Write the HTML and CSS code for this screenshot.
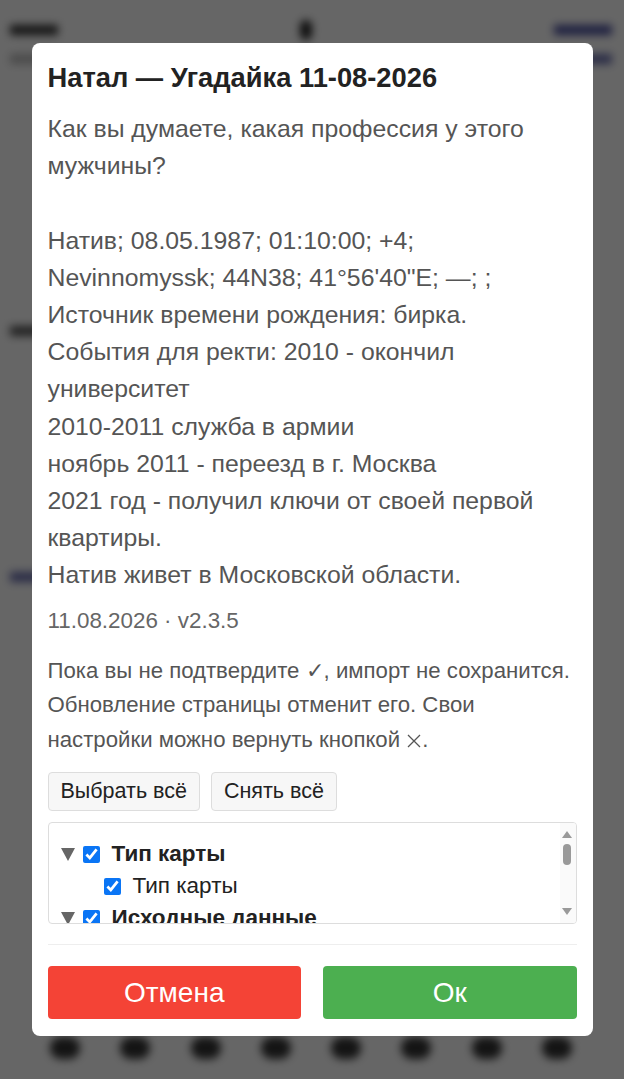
FILE: index.html
```html
<!DOCTYPE html>
<html lang="ru">
	<head>
		<meta charset="utf-8">
		<title>Натал — Угадайка</title>
		<link rel="stylesheet" href="styles.css">
	</head>
	<body>
		<!-- page under the dialog -->
		<div class="page">
			<div class="page-top">
				<span class="page-brand"></span>
				<span class="page-avatar"></span>
				<span class="page-link"></span>
			</div>
			<div class="page-sub">
				<span class="page-line short"></span>
				<span class="page-line link"></span>
			</div>
			<div class="page-body">
				<span class="page-line dark"></span>
				<span class="page-line link"></span>
			</div>
			<div class="page-dock">
				<span></span><span></span><span></span><span></span>
				<span></span><span></span><span></span><span></span>
			</div>
		</div>

		<div class="overlay">
			<div class="dialog">
				<h3 class="dialog-title">Натал — Угадайка 11-08-2026</h3>
				<div class="dialog-text">Как вы думаете, какая профессия у этого мужчины?

Натив; 08.05.1987; 01:10:00; +4; Nevinnomyssk; 44N38; 41°56'40"E; —; ;
Источник времени рождения: бирка.
События для ректи: 2010 - окончил университет
2010-2011 служба в армии
ноябрь 2011 - переезд в г. Москва
2021 год - получил ключи от своей первой квартиры.
Натив живет в Московской области.</div>
				<div class="dialog-meta">11.08.2026 · v2.3.5</div>
				<p class="dialog-note">Пока вы не подтвердите ✓, импорт не сохранится. Обновление страницы отменит его. Свои настройки можно вернуть кнопкой <svg class="icon-x" viewBox="0 0 14 14"><path d="M1 1L13 13M13 1L1 13" /></svg>.</p>

				<div class="select-row">
					<button class="btn-light">Выбрать всё</button>
					<button class="btn-light">Снять всё</button>
				</div>

				<div class="tree-box">
					<ul class="tree">
						<li>
							<label class="tree-row">
								<svg class="caret" viewBox="0 0 14 13"><polygon points="0,0 14,0 7,13" /></svg>
								<input type="checkbox" checked>
								<b>Тип карты</b>
							</label>
							<ul>
								<li><label class="tree-row"><input type="checkbox" checked> Тип карты</label></li>
							</ul>
						</li>
						<li>
							<label class="tree-row">
								<svg class="caret" viewBox="0 0 14 13"><polygon points="0,0 14,0 7,13" /></svg>
								<input type="checkbox" checked>
								<b>Исходные данные</b>
							</label>
							<ul>
								<li><label class="tree-row"><input type="checkbox" checked> Дата и время</label></li>
								<li><label class="tree-row"><input type="checkbox" checked> Место рождения</label></li>
								<li><label class="tree-row"><input type="checkbox" checked> Часовой пояс</label></li>
							</ul>
						</li>
						<li>
							<label class="tree-row">
								<svg class="caret" viewBox="0 0 14 13"><polygon points="0,0 14,0 7,13" /></svg>
								<input type="checkbox" checked>
								<b>Настройки</b>
							</label>
						</li>
					</ul>
					<div class="scrollbar">
						<svg class="scroll-arrow" viewBox="0 0 10 7"><polygon points="0,7 10,7 5,0" /></svg>
						<div class="scroll-track"><div class="scroll-thumb"></div></div>
						<svg class="scroll-arrow" viewBox="0 0 10 7"><polygon points="0,0 10,0 5,7" /></svg>
					</div>
				</div>

				<div class="dialog-foot">
					<button class="btn btn-cancel">Отмена</button>
					<button class="btn btn-ok">Ок</button>
				</div>
			</div>
		</div>
	</body>
</html>
```

FILE: styles.css
```css
html, body {
	margin: 0;
	height: 100%;
}

body {
	font-family: "Liberation Sans", Arial, Helvetica, sans-serif;
	background-color: #fff;
	overflow: hidden;
}

/* page behind the modal */
.page {
	height: 100%;
	display: flex;
	flex-direction: column;
	padding: 20px 12px 0 10px;
	box-sizing: border-box;
	filter: blur(4px);
}

.page-top {
	display: flex;
	justify-content: space-between;
	align-items: center;
}

.page-brand {
	width: 48px;
	height: 10px;
	background-color: #333;
}

.page-avatar {
	width: 12px;
	height: 20px;
	border-radius: 6px;
	background-color: #222;
}

.page-link {
	width: 58px;
	height: 10px;
	background-color: #4a4f9e;
}

.page-sub {
	display: flex;
	justify-content: space-between;
	margin-top: 14px;
}

.page-line {
	display: block;
	height: 10px;
	width: 36px;
	background-color: #bbb;
}

.page-line.short { width: 30px; }
.page-line.link { background-color: #6a6fb0; width: 70px; }
.page-line.dark { background-color: #555; }

.page-body {
	display: flex;
	flex-direction: column;
	gap: 236px;
	padding-top: 262px;
}

.page-dock {
	margin-top: auto;
	display: flex;
	justify-content: space-around;
	padding: 8px 20px 20px;
}

.page-dock span {
	width: 30px;
	height: 22px;
	border-radius: 11px;
	background-color: #333;
}

/* modal */
.overlay {
	position: fixed;
	inset: 0;
	background-color: rgba(0, 0, 0, 0.6);
	display: flex;
	align-items: center;
	justify-content: center;
}

.dialog {
	width: 561px;
	box-sizing: border-box;
	background-color: #fff;
	border-radius: 8px;
	padding: 17px 16px 17px 16px;
}

.dialog-title {
	margin: 0;
	font-size: 27.3px;
	line-height: 36px;
	color: #222;
}

.dialog-text {
	margin-top: 14px;
	font-size: 24.8px;
	line-height: 37.2px;
	color: #555;
	white-space: pre-wrap;
}

.dialog-meta {
	margin-top: 10px;
	font-size: 22.4px;
	line-height: 34px;
	color: #666;
}

.dialog-note {
	margin: 16px 0 0 0;
	font-size: 22.2px;
	line-height: 34.5px;
	color: #555;
}

.icon-x {
	width: 14px;
	height: 14px;
	margin: 0 1px;
	vertical-align: -1px;
	fill: none;
	stroke: #555;
	stroke-width: 1.3;
}

.select-row {
	display: flex;
	gap: 11px;
	margin-top: 15px;
}

.btn-light {
	font-family: inherit;
	font-size: 21.5px;
	color: #222;
	background-color: #f7f7f7;
	border: solid 1px #ddd;
	border-radius: 4px;
	padding: 6px 12px;
	height: 39px;
}

/* options tree */
.tree-box {
	display: flex;
	height: 102px;
	box-sizing: border-box;
	margin-top: 11px;
	border: solid 1px #ddd;
	border-radius: 4px;
	overflow: hidden;
}

.tree, .tree ul {
	list-style: none;
	margin: 0;
	padding: 0;
}

.tree {
	flex: 1;
	padding: 15px 0 0 12px;
	overflow: hidden;
}

.tree ul {
	padding-left: 43px;
}

.tree-row {
	display: flex;
	align-items: center;
	height: 32px;
	font-size: 22.5px;
	color: #222;
	white-space: nowrap;
}

.tree-row input {
	width: 17px;
	height: 17px;
	margin: 0 12px 0 0;
	accent-color: #0a75f5;
}

.caret {
	width: 14px;
	height: 13px;
	margin-right: 8px;
	fill: #666;
}

.scrollbar {
	width: 15px;
	display: flex;
	flex-direction: column;
	align-items: center;
	background-color: #fafafa;
	padding: 8px 1px 8px 0;
}

.scroll-arrow {
	width: 10px;
	height: 7px;
	fill: #999;
}

.scroll-track {
	flex: 1;
	padding-top: 6px;
}

.scroll-thumb {
	width: 8px;
	height: 21px;
	border-radius: 4px;
	background-color: #999;
}

/* footer buttons */
.dialog-foot {
	display: flex;
	gap: 22px;
	margin-top: 20px;
	padding-top: 21px;
	border-top: solid 1px #eee;
}

.btn {
	flex: 1;
	height: 53px;
	border: none;
	border-radius: 4px;
	font-family: inherit;
	font-size: 28px;
	color: #fff;
}

.btn-cancel {
	background-color: #f44336;
}

.btn-ok {
	background-color: #4caf50;
}
```
